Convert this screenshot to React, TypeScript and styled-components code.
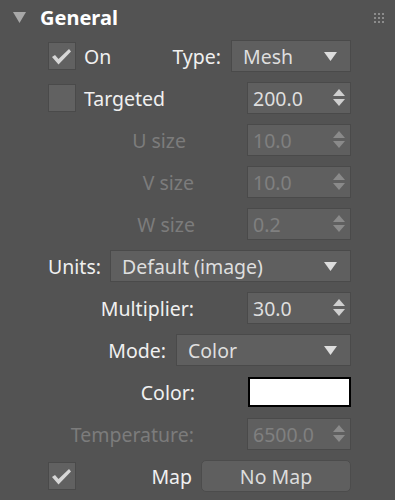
import React from "react";
import styled, { createGlobalStyle } from "styled-components";

const GlobalStyle = createGlobalStyle`
  html, body {
    margin: 0;
    padding: 0;
    background: #535353;
  }
  body {
    font-family: "Noto Sans", "Open Sans", sans-serif;
    font-size: 19.5px;
    color: #e6e6e6;
  }
`;

const Panel = styled.div`
  width: 395px;
  height: 500px;
  background: #535353;
  display: flex;
  flex-direction: column;
  gap: 10px;
  box-sizing: border-box;
  overflow: hidden;
`;

const Header = styled.div`
  box-sizing: border-box;
  display: flex;
  align-items: center;
  height: 30px;
  padding: 4px 11px 0 13px;
  gap: 14px;
`;

const Title = styled.span`
  font-weight: bold;
  color: #ffffff;
  font-size: 20px;
  flex: 1;
`;

const Grip = styled.div`
  display: grid;
  grid-template-columns: repeat(3, 2px);
  grid-auto-rows: 2px;
  gap: 2px;
  margin-top: 2px;
  span {
    background: #8c8c8c;
  }
`;

const Row = styled.div<{ $gap?: number; $end?: boolean }>`
  display: flex;
  align-items: center;
  justify-content: ${({ $end }) => ($end ? "flex-end" : "flex-start")};
  height: 32px;
  flex: none;
  padding: 0 44px 0 48px;
  gap: ${({ $gap }) => $gap ?? 10}px;
`;

const Spacer = styled.div`
  flex: 1;
`;

const Label = styled.span<{ $disabled?: boolean; $push?: number }>`
  color: ${({ $disabled }) => ($disabled ? "#7c7c7c" : "#f0f0f0")};
  white-space: nowrap;
  margin-right: ${({ $push }) => $push ?? 0}px;
`;

const Box = styled.div<{ $disabled?: boolean }>`
  box-sizing: border-box;
  height: 32px;
  display: flex;
  align-items: center;
  background: #5f5f5f;
  border: 1px solid #4a4a4a;
  color: ${({ $disabled }) => ($disabled ? "#808080" : "#dedede")};
`;

const SelectBox = styled(Box)<{ $width?: number }>`
  width: ${({ $width }) => ($width ? `${$width}px` : "auto")};
  flex: ${({ $width }) => ($width ? "none" : "1")};
  padding: 0 13px 0 11px;
  justify-content: space-between;
`;

const SpinBox = styled(Box)`
  width: 104px;
  padding: 0 5px 0 5px;
  justify-content: space-between;
`;

const Check = styled.div`
  box-sizing: border-box;
  width: 28px;
  height: 28px;
  flex: none;
  background: #616161;
  border: 1px solid #4a4a4a;
  display: flex;
  align-items: center;
  justify-content: center;
`;

const Swatch = styled.div`
  box-sizing: border-box;
  width: 103px;
  height: 30px;
  background: #ffffff;
  border: 2px solid #000000;
`;

const MapButton = styled.button`
  box-sizing: border-box;
  width: 150px;
  height: 32px;
  background: #5f5f5f;
  border: 1px solid #4c4c4c;
  border-radius: 5px;
  color: #dcdcdc;
  font-family: inherit;
  font-size: 19.5px;
  padding: 0;
`;

const Arrow = () => (
  <svg width="13" height="9" viewBox="0 0 13 9">
    <polygon points="0,0 13,0 6.5,9" fill="#dddddd" />
  </svg>
);

const Spinners = ({ disabled }: { disabled?: boolean }) => (
  <svg width="12" height="20" viewBox="0 0 12 20">
    <polygon points="0,8 6,1 12,8" fill={disabled ? "#8a8a8a" : "#cfcfcf"} />
    <polygon points="0,11 12,11 6,18" fill={disabled ? "#8a8a8a" : "#cfcfcf"} />
  </svg>
);

const Tick = () => (
  <svg width="20" height="16" viewBox="0 0 20 16" style={{ marginTop: 2 }}>
    <path d="M0 8 L3 6 L6.5 10 L17 0 L19 2.5 L6.5 15.5 Z" fill="#d6d6d6" />
  </svg>
);

const Spinner = ({ value, disabled }: { value: string; disabled?: boolean }) => (
  <SpinBox $disabled={disabled}>
    <span>{value}</span>
    <Spinners disabled={disabled} />
  </SpinBox>
);

export default function App() {
  return (
    <Panel>
      <GlobalStyle />
      <Header>
        <svg width="13" height="11" viewBox="0 0 13 11">
          <polygon points="0,0 13,0 6.5,11" fill="#a8a8a8" />
        </svg>
        <Title>General</Title>
        <Grip>
          {Array.from({ length: 9 }).map((_, i) => (
            <span key={i} />
          ))}
        </Grip>
      </Header>

      <Row $gap={8}>
        <Check>
          <Tick />
        </Check>
        <Label>On</Label>
        <Spacer />
        <Label $push={2}>Type:</Label>
        <SelectBox $width={120}>
          <span>Mesh</span>
          <Arrow />
        </SelectBox>
      </Row>

      <Row $gap={8}>
        <Check />
        <Label>Targeted</Label>
        <Spacer />
        <Spinner value="200.0" />
      </Row>

      <Row $end>
        <Label $disabled $push={51}>U size</Label>
        <Spinner value="10.0" disabled />
      </Row>
      <Row $end>
        <Label $disabled $push={43}>V size</Label>
        <Spinner value="10.0" disabled />
      </Row>
      <Row $end>
        <Label $disabled $push={42}>W size</Label>
        <Spinner value="0.2" disabled />
      </Row>

      <Row $gap={9}>
        <Label>Units:</Label>
        <SelectBox>
          <span>Default (image)</span>
          <Arrow />
        </SelectBox>
      </Row>

      <Row $end>
        <Label $push={43}>Multiplier:</Label>
        <Spinner value="30.0" />
      </Row>

      <Row $end>
        <Label>Mode:</Label>
        <SelectBox $width={175}>
          <span>Color</span>
          <Arrow />
        </SelectBox>
      </Row>

      <Row $end>
        <Label $push={43}>Color:</Label>
        <Swatch />
      </Row>

      <Row $end>
        <Label $disabled $push={43}>Temperature:</Label>
        <Spinner value="6500.0" disabled />
      </Row>

      <Row $gap={9}>
        <Check>
          <Tick />
        </Check>
        <Spacer />
        <Label>Map</Label>
        <MapButton>No Map</MapButton>
      </Row>
    </Panel>
  );
}
